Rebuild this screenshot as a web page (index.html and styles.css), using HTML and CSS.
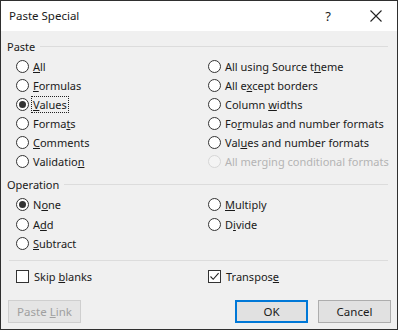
FILE: index.html
```html
<!DOCTYPE html>
<html lang="en">
<head>
    <meta charset="UTF-8">
    <title>Paste Special</title>
    <link rel="stylesheet" href="styles.css">
</head>
<body>
    <div class="dialog">
        <!-- Title bar -->
        <div class="titlebar">
            <span class="title">Paste Special</span>
            <span class="help">?</span>
            <svg class="close" width="12" height="12" viewBox="0 0 12 12">
                <path d="M0.5 0.5 L11.5 11.5 M11.5 0.5 L0.5 11.5" stroke="#222" stroke-width="1.1" fill="none"/>
            </svg>
        </div>

        <div class="content">
            <!-- Paste group -->
            <div class="group-label"><span>Paste</span></div>
            <div class="options">
                <label class="opt"><span class="radio"></span><span><u>A</u>ll</span></label>
                <label class="opt"><span class="radio"></span><span>All using Source t<u>h</u>eme</span></label>
                <label class="opt"><span class="radio"></span><span><u>F</u>ormulas</span></label>
                <label class="opt"><span class="radio"></span><span>All e<u>x</u>cept borders</span></label>
                <label class="opt"><span class="radio checked"></span><span class="focus"><u>V</u>alues</span></label>
                <label class="opt"><span class="radio"></span><span>Column <u>w</u>idths</span></label>
                <label class="opt"><span class="radio"></span><span>Forma<u>t</u>s</span></label>
                <label class="opt"><span class="radio"></span><span>Fo<u>r</u>mulas and number formats</span></label>
                <label class="opt"><span class="radio"></span><span><u>C</u>omments</span></label>
                <label class="opt"><span class="radio"></span><span>Val<u>u</u>es and number formats</span></label>
                <label class="opt"><span class="radio"></span><span>Validatio<u>n</u></span></label>
                <label class="opt disabled"><span class="radio"></span><span>All merging conditional formats</span></label>
            </div>

            <!-- Operation group -->
            <div class="group-label op"><span>Operation</span></div>
            <div class="options">
                <label class="opt"><span class="radio checked"></span><span>N<u>o</u>ne</span></label>
                <label class="opt"><span class="radio"></span><span><u>M</u>ultiply</span></label>
                <label class="opt"><span class="radio"></span><span>A<u>d</u>d</span></label>
                <label class="opt"><span class="radio"></span><span>D<u>i</u>vide</span></label>
                <label class="opt"><span class="radio"></span><span><u>S</u>ubtract</span></label>
            </div>

            <div class="separator"></div>

            <div class="options checks">
                <label class="opt"><span class="check"></span><span>Skip <u>b</u>lanks</span></label>
                <label class="opt">
                    <span class="check">
                        <svg width="11" height="11" viewBox="0 0 11 11"><path d="M1.5 5.5 L4.2 8.3 L9.6 2.2" stroke="#222" stroke-width="1.1" fill="none"/></svg>
                    </span>
                    <span>Transpos<u>e</u></span>
                </label>
            </div>

            <!-- Buttons -->
            <div class="buttons">
                <button class="btn" disabled>Paste <u>L</u>ink</button>
                <span class="spacer"></span>
                <button class="btn default">OK</button>
                <button class="btn">Cancel</button>
            </div>
        </div>
    </div>
</body>
</html>
```

FILE: styles.css
```css
body {
    margin: 0;
    padding: 0;
    font-family: 'Noto Sans', 'Open Sans', sans-serif;
    font-size: 11px;
    color: #1a1a1a;
    background: #f0f0f0;
}

.dialog {
    box-sizing: border-box;
    width: 398px;
    height: 330px;
    border: 1px solid #2f2f2f;
    background: #f0f0f0;
    display: flex;
    flex-direction: column;
}

.titlebar {
    height: 30px;
    background: #fff;
    display: flex;
    align-items: center;
    padding: 0 15px 0 8px;
}

.title {
    font-size: 11.5px;
    flex: 1;
    margin-top: -1px;
}

.help {
    font-size: 13px;
    margin-right: 39px;
    margin-top: -1px;
}

.close {
    display: block;
}

.content {
    padding: 7px 6px 0 6px;
}

.group-label {
    display: flex;
    align-items: center;
    height: 16px;
    margin-bottom: 3px;
}

.group-label::after {
    content: "";
    flex: 1;
    height: 1px;
    background: #dcdcdc;
    margin: 0 3px 0 5px;
}

.group-label.op {
    margin-top: 5px;
}

.options {
    display: grid;
    grid-template-columns: 192px 1fr;
    padding-left: 9px;
}

.opt {
    display: flex;
    align-items: center;
    height: 19px;
    white-space: nowrap;
}

.op + .options .opt {
    height: 19.5px;
}

.radio {
    box-sizing: border-box;
    width: 13px;
    height: 13px;
    border: 1px solid #333;
    border-radius: 50%;
    background: #fff;
    margin-right: 4px;
    display: flex;
    align-items: center;
    justify-content: center;
    flex-shrink: 0;
}

.radio.checked::after {
    content: "";
    width: 7px;
    height: 7px;
    border-radius: 50%;
    background: #333;
}

.focus {
    outline: 1px dotted #222;
    outline-offset: 0;
    padding: 0 1px;
    margin-left: -1px;
    line-height: 15px;
}

.disabled {
    color: #b4b4b4;
}

.disabled .radio {
    border-color: #d6d6d6;
    background: #f4f4f4;
}

.separator {
    height: 1px;
    background: #dcdcdc;
    margin: 6px 3px 6px 2px;
}

.checks .opt {
    height: 20px;
}

.check {
    box-sizing: border-box;
    width: 13px;
    height: 13px;
    border: 1px solid #333;
    background: #fff;
    margin-right: 5px;
    display: flex;
    align-items: center;
    justify-content: center;
    flex-shrink: 0;
}

.check svg {
    display: block;
}

.buttons {
    display: flex;
    align-items: center;
    margin-top: 13px;
    padding-left: 1px;
}

.spacer {
    flex: 1;
}

.btn {
    box-sizing: border-box;
    width: 73px;
    height: 23px;
    font-family: inherit;
    font-size: 11.5px;
    color: #1a1a1a;
    background: #e1e1e1;
    border: 1px solid #adadad;
    padding: 0;
    margin-left: 10px;
}

.btn:first-child {
    margin-left: 0;
}

.btn.default {
    border: 2px solid #0078d7;
}

.btn:disabled {
    color: #a0a0a0;
    background: #e5e5e5;
    border-color: #cfcfcf;
}
```
